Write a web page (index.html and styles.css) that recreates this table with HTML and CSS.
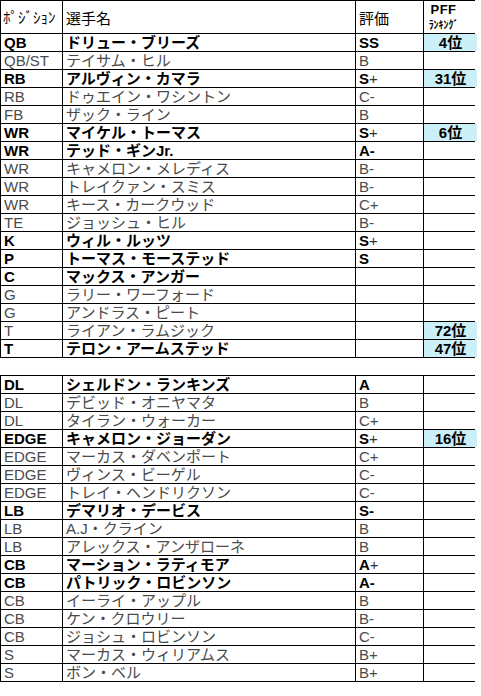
FILE: index.html
```html
<!DOCTYPE html>
<html lang="ja">
<head>
<meta charset="utf-8">
<title>Roster</title>
<link rel="stylesheet" href="styles.css">
</head>
<body>
<div class="sheet first">
  <div class="row head">
    <div class="c pos">ﾎﾟｼﾞｼｮﾝ</div>
    <div class="c name">選手名</div>
    <div class="c rate">評価</div>
    <div class="c rank rank-head"><span class="pff">PFF</span><span class="rk">ﾗﾝｷﾝｸﾞ</span></div>
  </div>
  <div class="row b"><div class="c">QB</div><div class="c">ドリュー・ブリーズ</div><div class="c">SS</div><div class="c rank hl">4位</div></div>
  <div class="row"><div class="c">QB/ST</div><div class="c">テイサム・ヒル</div><div class="c">B</div><div class="c rank"></div></div>
  <div class="row b"><div class="c">RB</div><div class="c">アルヴィン・カマラ</div><div class="c">S<span class="thin">+</span></div><div class="c rank hl">31位</div></div>
  <div class="row"><div class="c">RB</div><div class="c">ドゥエイン・ワシントン</div><div class="c">C-</div><div class="c rank"></div></div>
  <div class="row"><div class="c">FB</div><div class="c">ザック・ライン</div><div class="c">B</div><div class="c rank"></div></div>
  <div class="row b"><div class="c">WR</div><div class="c">マイケル・トーマス</div><div class="c">S<span class="thin">+</span></div><div class="c rank hl">6位</div></div>
  <div class="row b"><div class="c">WR</div><div class="c">テッド・ギンJr.</div><div class="c">A-</div><div class="c rank"></div></div>
  <div class="row"><div class="c">WR</div><div class="c">キャメロン・メレディス</div><div class="c">B-</div><div class="c rank"></div></div>
  <div class="row"><div class="c">WR</div><div class="c">トレイクァン・スミス</div><div class="c">B-</div><div class="c rank"></div></div>
  <div class="row"><div class="c">WR</div><div class="c">キース・カークウッド</div><div class="c">C+</div><div class="c rank"></div></div>
  <div class="row"><div class="c">TE</div><div class="c">ジョッシュ・ヒル</div><div class="c">B-</div><div class="c rank"></div></div>
  <div class="row b"><div class="c">K</div><div class="c">ウィル・ルッツ</div><div class="c">S<span class="thin">+</span></div><div class="c rank"></div></div>
  <div class="row b"><div class="c">P</div><div class="c">トーマス・モーステッド</div><div class="c">S</div><div class="c rank"></div></div>
  <div class="row b"><div class="c">C</div><div class="c">マックス・アンガー</div><div class="c"></div><div class="c rank"></div></div>
  <div class="row"><div class="c">G</div><div class="c">ラリー・ワーフォード</div><div class="c"></div><div class="c rank"></div></div>
  <div class="row"><div class="c">G</div><div class="c">アンドラス・ピート</div><div class="c"></div><div class="c rank"></div></div>
  <div class="row"><div class="c">T</div><div class="c">ライアン・ラムジック</div><div class="c"></div><div class="c rank hl">72位</div></div>
  <div class="row b"><div class="c">T</div><div class="c">テロン・アームステッド</div><div class="c"></div><div class="c rank hl">47位</div></div>
</div>

<div class="sheet second">
  <div class="row b"><div class="c">DL</div><div class="c">シェルドン・ランキンズ</div><div class="c">A</div><div class="c rank"></div></div>
  <div class="row"><div class="c">DL</div><div class="c">デビッド・オニヤマタ</div><div class="c">B</div><div class="c rank"></div></div>
  <div class="row"><div class="c">DL</div><div class="c">タイラン・ウォーカー</div><div class="c">C+</div><div class="c rank"></div></div>
  <div class="row b"><div class="c">EDGE</div><div class="c">キャメロン・ジョーダン</div><div class="c">S<span class="thin">+</span></div><div class="c rank hl">16位</div></div>
  <div class="row"><div class="c">EDGE</div><div class="c">マーカス・ダベンポート</div><div class="c">C+</div><div class="c rank"></div></div>
  <div class="row"><div class="c">EDGE</div><div class="c">ヴィンス・ビーゲル</div><div class="c">C-</div><div class="c rank"></div></div>
  <div class="row"><div class="c">EDGE</div><div class="c">トレイ・ヘンドリクソン</div><div class="c">C-</div><div class="c rank"></div></div>
  <div class="row b"><div class="c">LB</div><div class="c">デマリオ・デービス</div><div class="c">S-</div><div class="c rank"></div></div>
  <div class="row"><div class="c">LB</div><div class="c">A.J・クライン</div><div class="c">B</div><div class="c rank"></div></div>
  <div class="row"><div class="c">LB</div><div class="c">アレックス・アンザローネ</div><div class="c">B</div><div class="c rank"></div></div>
  <div class="row b"><div class="c">CB</div><div class="c">マーション・ラティモア</div><div class="c">A<span class="thin">+</span></div><div class="c rank"></div></div>
  <div class="row b"><div class="c">CB</div><div class="c">パトリック・ロビンソン</div><div class="c">A-</div><div class="c rank"></div></div>
  <div class="row"><div class="c">CB</div><div class="c">イーライ・アップル</div><div class="c">B</div><div class="c rank"></div></div>
  <div class="row"><div class="c">CB</div><div class="c">ケン・クロウリー</div><div class="c">B-</div><div class="c rank"></div></div>
  <div class="row"><div class="c">CB</div><div class="c">ジョシュ・ロビンソン</div><div class="c">C-</div><div class="c rank"></div></div>
  <div class="row"><div class="c">S</div><div class="c">マーカス・ウィリアムス</div><div class="c">B+</div><div class="c rank"></div></div>
  <div class="row"><div class="c">S</div><div class="c">ボン・ベル</div><div class="c">B+</div><div class="c rank"></div></div>
</div>
</body>
</html>
```

FILE: styles.css
```css
html, body {
  margin: 0;
  padding: 0;
  background: #fff;
}

body {
  font-family: "Liberation Sans", "Noto Sans CJK JP", sans-serif;
  font-size: 15px;
  color: #4a4a4a;
}

.sheet {
  display: grid;
  grid-template-columns: 61px 292px 67px 53px;
  grid-auto-rows: 17px;
  gap: 1px;
  width: 473px;
  background: #000;
  border: 1px solid #000;
}

.sheet.first {
  grid-template-rows: 32px;
}

.sheet.second {
  margin-top: 17px;
}

.row {
  display: contents;
}

.row.head {
  color: #000;
}

.row.b {
  font-weight: 700;
  color: #000;
}

.c {
  background: #fff;
  display: flex;
  align-items: center;
  padding-left: 3px;
  white-space: nowrap;
  overflow: hidden;
  line-height: 17px;
}

.thin {
  font-weight: 400;
  color: #333;
}

.rank {
  justify-content: center;
  padding-left: 0;
  font-weight: 700;
  color: #000;
}

.hl {
  background: #ccf0f8;
}

.head .pos {
  font-size: 15px;
  padding-left: 2px;
}

.head .name,
.head .rate {
  font-family: "Noto Sans CJK JP", sans-serif;
  font-size: 15px;
}

.rank-head {
  flex-direction: column;
  justify-content: center;
  align-items: center;
  padding-right: 14px;
  line-height: 14px;
}

.pff {
  font-size: 13px;
  line-height: 14px;
  font-weight: 700;
  letter-spacing: 0.5px;
}

.rk {
  font-family: "Noto Sans CJK JP", sans-serif;
  font-size: 11px;
  line-height: 14px;
  font-weight: 700;
  display: inline-block;
  transform: scaleX(0.9);
}
```
